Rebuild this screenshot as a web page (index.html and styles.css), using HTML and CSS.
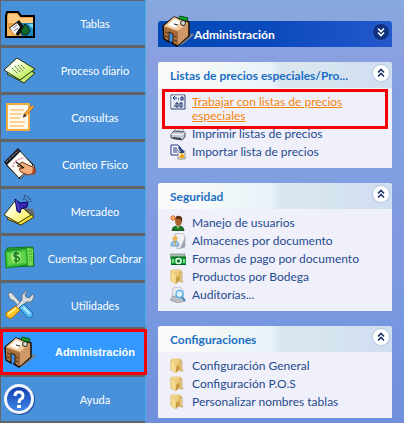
FILE: index.html
```html
<!DOCTYPE html>
<html lang="es">
	<head>
		<meta charset="UTF-8" />
		<meta name="viewport" content="width=device-width, initial-scale=1.0" />
		<title>Administración</title>
		<link rel="stylesheet" href="styles.css">
	</head>
	<body>
		<svg class="sprites" aria-hidden="true">
			<defs>
				<linearGradient id="lime" x1="0" y1="0" x2="1" y2="1">
					<stop offset="0.3" stop-color="#fbfff0" />
					<stop offset="1" stop-color="#a4e60c" />
				</linearGradient>
				<linearGradient id="note" x1="0" y1="0" x2="1" y2="1">
					<stop offset="0.2" stop-color="#fffff4" />
					<stop offset="1" stop-color="#ffef3c" />
				</linearGradient>
				<linearGradient id="globe" x1="0" y1="0" x2="0" y2="1">
					<stop offset="0" stop-color="#123fae" />
					<stop offset="1" stop-color="#3d86ea" />
				</linearGradient>
				<linearGradient id="manila" x1="0" y1="0" x2="1" y2="1">
					<stop offset="0" stop-color="#fbe6a4" />
					<stop offset="1" stop-color="#dfb14e" />
				</linearGradient>
			</defs>
			<symbol id="desk" viewBox="0 0 32 32">
				<path d="M14 28l6-1 10-9 2 2-11 9-5 2z" fill="#7b7f88" />
				<path d="M1 11L12 2l15 5v14L15 31l-5-3v-9l-3-1v9l-5-3z" fill="#b98049" stroke="#1a0f08" stroke-width="1.5" />
				<path d="M2 11L12 2l14 6-10 8z" fill="#f6cda0" />
				<path d="M16 16l10-8v13L16 30z" fill="#cf9866" />
				<path d="M2 12l14 5v12l-5-2v-8l-4-2v8l-4-2z" fill="#a56b3b" />
				<path d="M7 17l4 2v8l-4-1z" fill="#4890da" />
				<path d="M7 17l4 2v9M7 17v9" fill="none" stroke="#2b1809" />
				<path d="M3 17l3 1M3 21l3 1M12 21l3 1M12 25l3 1" stroke="#5d3517" />
				<path d="M6 10l6-6 7 3-6 6z" fill="#fff" />
				<path d="M12 9l4 1" stroke="#222" />
				<path d="M18 1l8 2-1 3-8-2z" fill="#16a82a" stroke="#064d10" />
				<circle cx="21" cy="8" r="2.5" fill="#d8d8cc" stroke="#222" />
			</symbol>
			<symbol id="folder" viewBox="0 0 16 16">
				<path d="M1 2q0-1 1-1h8q1 0 1 1v10H1z" fill="url(#manila)" stroke="#d9b562" stroke-width=".6" />
				<path d="M10 3h2v8l1 2h-3z" fill="#eed9a0" stroke="#b58c3a" stroke-width=".6" />
				<path d="M1 2l5 3v10l-5-3z" fill="#f7dc94" stroke="#dcb45c" stroke-width=".6" />
				<path d="M6 15V9l3-2v5z" fill="#c99a3e" />
			</symbol>
			<symbol id="chevron-up" viewBox="0 0 16 16">
				<path d="M5 7.5l3-3 3 3M5 11.5l3-3 3 3" fill="none" stroke="currentColor" stroke-width="1.6" />
			</symbol>
			<symbol id="chevron-down" viewBox="0 0 16 16">
				<path d="M5 4.5l3 3 3-3M5 8.5l3 3 3-3" fill="none" stroke="currentColor" stroke-width="1.6" />
			</symbol>
		</svg>

		<nav class="sidebar">
			<button class="nav-btn" type="button">
				<svg viewBox="0 0 32 32">
					<path d="M2 30V9l1-4h11l3 4h13v21z" fill="#e8a04a" stroke="#000" stroke-width="2" />
					<path d="M4 7h9l3 4H4zM4 11h25v5H4z" fill="#ffc980" />
					<path d="M17 16h12v13H17z" fill="#1886bd" />
					<path d="M24 17h5v5z" fill="#7bd4ee" />
					<path d="M5 21l10-8 6 8-7 8z" fill="#111" />
					<path d="M6 21l7-5 3 4-5 8z" fill="#f4f6fa" />
					<path d="M9 21l4-3M10 24l4-3" stroke="#778" />
					<path d="M21 17l3 3 2 4-3 4h-4l-2-4z" fill="#11682a" stroke="#03240b" />
					<path d="M3 18l6 11H3z" fill="#f4b35d" />
				</svg>
				<span>Tablas</span>
			</button>
			<button class="nav-btn" type="button">
				<svg viewBox="0 0 32 32">
					<path d="M3 20l9-10 19 9-11 10z" fill="#bfe970" stroke="#1f3007" />
					<path d="M0 16L13 4l18 11-15 11z" fill="url(#lime)" stroke="#24340c" />
					<path d="M8 14l5 5M11 12l5 6M14 11l5 6M17 11l4 4" stroke="#48622e" stroke-dasharray="2 1" />
				</svg>
				<span>Proceso diario</span>
			</button>
			<button class="nav-btn" type="button">
				<svg viewBox="0 0 32 32">
					<path d="M3 3h22v26H3z" fill="#fff9ed" stroke="#f1ac45" stroke-width="2" />
					<path d="M6 9h14M6 13h12M6 17h10M6 21h15M6 25h14" stroke="#f5ad43" />
					<path d="M29 5L20 15" stroke="#8a4c13" stroke-width="3" />
					<path d="M29 5l-8 9" stroke="#ffad32" stroke-width="2" />
					<path d="M21 13l-3 4 4-2z" fill="#222" />
				</svg>
				<span>Consultas</span>
			</button>
			<button class="nav-btn" type="button">
				<svg viewBox="0 0 32 32">
					<path d="M2 17l14-13 15 14-15 13z" fill="#c3c3ba" stroke="#333" />
					<path d="M1 15L15 2l14 15-14 13z" fill="#fffef4" stroke="#222" />
					<path d="M0 14L14 0l3 3L3 17z" fill="#1b1b24" />
					<path d="M2 14L15 2" stroke="#ddd" stroke-dasharray="1 1" />
					<path d="M9 19q0-7 11-9" fill="none" stroke="#e27db3" stroke-width="1.5" stroke-dasharray="2 1" />
					<path d="M13 18l5-4 6 3 7 3v5l-7 2-7-3-2-3 4-1z" fill="#f4ac79" stroke="#77361a" />
					<path d="M12 14l8 6" stroke="#242424" stroke-width="1.5" />
					<path d="M29 19l3 3-1 4-3 1z" fill="#a44622" />
				</svg>
				<span>Conteo Físico</span>
			</button>
			<button class="nav-btn" type="button">
				<svg viewBox="0 0 32 32">
					<path d="M20 13l9 1 2 6-8 4z" fill="#686a70" />
					<path d="M3 24l12-14 15 12-13 8z" fill="#f4dd37" stroke="#3b370b" />
					<path d="M0 20L11 6l16 14-13 8z" fill="url(#note)" stroke="#34330f" />
					<path d="M11 4l5 4 8-1-1 5-6 2-1 4-3-2z" fill="#3429b5" stroke="#0d0750" />
					<path d="M12 5l3 10" stroke="#5a50dc" />
					<path d="M19 4q4-1 5 4M20 1q6 0 7 6" fill="none" stroke="#1b2440" stroke-dasharray="2 1" />
				</svg>
				<span>Mercadeo</span>
			</button>
			<button class="nav-btn" type="button">
				<svg viewBox="0 0 32 32">
					<path d="M3 6l26-1 1 19-26 1z" fill="#37a432" stroke="#14731b" />
					<path d="M1 9l22-3 1 17-22 3z" fill="#39bd38" stroke="#128020" />
					<path d="M3 11l18-2 1 12-18 2z" fill="#65d44d" />
					<path d="M23 6l6 1v16l-5 1z" fill="#76da50" />
					<path d="M25 9h3M25 12h3M25 15h3M25 18h3" stroke="#279a2b" stroke-dasharray="1 1" />
					<ellipse cx="12" cy="15" rx="5" ry="6" fill="#a4eb7b" />
					<path d="M15 12q-5-3-5 1 0 2 3 2t2 3q-1 2-5 0M12 9v12" fill="none" stroke="#167824" stroke-width="1.5" />
				</svg>
				<span>Cuentas por Cobrar</span>
			</button>
			<button class="nav-btn" type="button">
				<svg viewBox="0 0 32 32">
					<path d="M4 5l3-2 7 8 5 6-3 2-6-7-4-2z" fill="#d7e0e5" stroke="#68757f" />
					<path d="M22 2l-4 4v5L10 20l3 3 9-10 5 0 3-5-1-3-4 4-3-1-1-3 3-3z" fill="#d4dce1" stroke="#687985" />
					<path d="M12 17l4 4-8 8q-3 1-5-1t-1-4z" fill="#ffc62b" stroke="#b76c0a" />
					<path d="M4 25l8-6" stroke="#fff082" stroke-width="2" />
					<path d="M17 17l3-2 8 8q2 3 0 5t-5 0l-8-9z" fill="#52b9f8" stroke="#1d6da6" />
					<path d="M19 18l7 7" stroke="#b8e7ff" stroke-width="2" />
				</svg>
				<span>Utilidades</span>
			</button>
			<button class="nav-btn active" type="button">
				<svg><use href="#desk" /></svg>
				<span>Administración</span>
			</button>
			<button class="nav-btn" type="button">
				<svg viewBox="0 0 32 32">
					<circle cx="16" cy="17" r="15" fill="#1d4c97" />
					<circle cx="15" cy="16" r="15" fill="#f3f6fc" />
					<circle cx="15" cy="16" r="12" fill="url(#globe)" />
					<path d="M11 13q0-4 4-4t4 4q0 2-2 3t-2 4" fill="none" stroke="#fff" stroke-width="3" />
					<path d="M13 22h4v3h-4z" fill="#fff" />
				</svg>
				<span>Ayuda</span>
			</button>
		</nav>

		<main class="content">
			<header class="banner">
				<svg class="banner-icon"><use href="#desk" /></svg>
				<h1>Administración</h1>
				<button class="toggle dark" type="button" aria-label="Expandir">
					<svg><use href="#chevron-down" /></svg>
				</button>
			</header>

			<section class="panel">
				<div class="panel-head">
					<h2>Listas de precios especiales/Pro...</h2>
					<button class="toggle" type="button" aria-label="Contraer">
						<svg><use href="#chevron-up" /></svg>
					</button>
				</div>
				<ul>
					<li class="marked">
						<a class="current" href="#">
							<svg viewBox="0 0 16 16">
								<path d="M1 1h14v14H1z" fill="#dce6f7" stroke="#34456d" />
								<path d="M2 14V2h12" fill="none" stroke="#fff" />
								<path d="M3 4h4M5 2L3 4l2 2" fill="none" stroke="#173c9c" />
								<path d="M8 5h1M4 12h1" stroke="#111" />
								<path d="M11 3h2v3h-2zM6 9h2v4H6zM10 9h2v4h-2z" fill="none" stroke="#14275e" />
							</svg>
							<span>Trabajar con listas de precios especiales</span>
						</a>
					</li>
					<li>
						<a href="#">
							<svg viewBox="0 0 16 16">
								<path d="M4 6l2-5h8l-2 6z" fill="#fff" stroke="#7a8595" />
								<path d="M7 3h5M6 5h5" stroke="#9eb4d0" />
								<path d="M1 8l3-3 11 1v5l-3 3-11-2z" fill="#bfc6cf" stroke="#454f5c" />
								<path d="M1 8l11 1 3-3" fill="none" stroke="#fff" />
								<path d="M3 11l8 1v2l-8-1z" fill="#3b4552" />
							</svg>
							<span>Imprimir listas de precios</span>
						</a>
					</li>
					<li>
						<a href="#">
							<svg viewBox="0 0 16 16">
								<path d="M1 1h7l2 2v8H1z" fill="#fff" stroke="#1c2f85" />
								<path d="M3 4h4M3 6h5M3 8h4" stroke="#1c2f85" />
								<path d="M8 7h7v8H8z" fill="#fff0c8" stroke="#8992a6" />
								<path d="M12 8l3 6H9z" fill="#f0a51f" />
								<path d="M9 2l5 5V3v6H9l2-2-3-3z" fill="#234183" />
							</svg>
							<span>Importar lista de precios</span>
						</a>
					</li>
				</ul>
			</section>

			<section class="panel">
				<div class="panel-head">
					<h2>Seguridad</h2>
					<button class="toggle" type="button" aria-label="Contraer">
						<svg><use href="#chevron-up" /></svg>
					</button>
				</div>
				<ul>
					<li>
						<a href="#">
							<svg viewBox="0 0 16 16">
								<path d="M2 16q0-5 5-5h2q5 0 5 5z" fill="#1d7427" stroke="#0c4514" stroke-width=".6" />
								<path d="M6 11h4l-2 3z" fill="#84c26e" />
								<ellipse cx="8.5" cy="6" rx="3.5" ry="5" fill="#a8642c" />
								<path d="M5 4q1-4 5-3 3 1 2 6l-2-3z" fill="#5e3213" />
								<path d="M1 1l4 4M5 1L1 5M3 0v6M0 3h6" stroke="#ee4d17" />
								<circle cx="3" cy="3" r="1" fill="#ffe13c" />
							</svg>
							<span>Manejo de usuarios</span>
						</a>
					</li>
					<li>
						<a href="#">
							<svg viewBox="0 0 16 16">
								<path d="M5 1l7-1 3 3v11l-8 2z" fill="#eef0f3" stroke="#a4a9b2" stroke-width=".7" />
								<path d="M15 4v10l-5 2z" fill="#a0a4ac" />
								<path d="M1 13q0-5 4-5t4 5z" fill="#99cbee" stroke="#4d87ba" stroke-width=".7" />
								<circle cx="5" cy="5.5" r="2.5" fill="#edb64d" />
								<path d="M4 9l1 4 1-4z" fill="#e9a126" />
							</svg>
							<span>Almacenes por documento</span>
						</a>
					</li>
					<li>
						<a href="#">
							<svg viewBox="0 0 16 16">
								<path d="M0 3h15v5H0z" fill="#a7bfad" stroke="#637d6a" stroke-width=".6" />
								<path d="M1 6h15v8H1z" fill="#0b9932" />
								<path d="M1 6h15M1 13.5h15" stroke="#075b1d" />
								<path d="M2 8h2v4H2zM13 8h2v4h-2z" fill="#79d984" />
								<circle cx="8.5" cy="10" r="2.5" fill="#0b8029" stroke="#e8ffe8" stroke-width="1.5" />
							</svg>
							<span>Formas de pago por documento</span>
						</a>
					</li>
					<li>
						<a href="#">
							<svg><use href="#folder" /></svg>
							<span>Productos por Bodega</span>
						</a>
					</li>
					<li>
						<a href="#">
							<svg viewBox="0 0 16 16">
								<path d="M3 1l7-1 3 3v10H2z" fill="#edeff2" stroke="#a5abb4" stroke-width=".7" />
								<path d="M0 13l3-4 10 1 2 4-7 2z" fill="#b9bdc4" stroke="#85898f" stroke-width=".6" />
								<circle cx="9.5" cy="7" r="3.5" fill="#dff4ff" stroke="#59afe1" stroke-width="1.5" />
								<path d="M12 10l3 4" stroke="#498bc2" stroke-width="2" />
							</svg>
							<span>Auditorías...</span>
						</a>
					</li>
				</ul>
			</section>

			<section class="panel">
				<div class="panel-head">
					<h2>Configuraciones</h2>
					<button class="toggle" type="button" aria-label="Contraer">
						<svg><use href="#chevron-up" /></svg>
					</button>
				</div>
				<ul>
					<li>
						<a href="#">
							<svg><use href="#folder" /></svg>
							<span>Configuración General</span>
						</a>
					</li>
					<li>
						<a href="#">
							<svg><use href="#folder" /></svg>
							<span>Configuración P.O.S</span>
						</a>
					</li>
					<li>
						<a href="#">
							<svg><use href="#folder" /></svg>
							<span>Personalizar nombres tablas</span>
						</a>
					</li>
				</ul>
			</section>
		</main>
	</body>
</html>
```

FILE: styles.css
```css
* {
	margin: 0;
	padding: 0;
	box-sizing: border-box;
}

body {
	display: flex;
	min-height: 100vh;
	font: 12px Lato, sans-serif;
	color: #1f4b8f;
}
.sprites {
	position: absolute;
	width: 0;
	height: 0;
}
button {
	border: none;
	font: inherit;
	cursor: pointer;
}

/* left menu */
.sidebar {
	display: flex;
	flex-direction: column;
	flex: none;
	gap: 3px;
	width: 146px;
	padding: 1px 0 1px 1px;
	border-right: 1px solid #40b0e4;
	background-color: #636363;
}
.nav-btn {
	display: flex;
	align-items: center;
	gap: 9px;
	height: 44px;
	padding-left: 3px;
	background-color: #4890da;
	color: white;
	font-size: 11px;
}
.nav-btn svg {
	flex: none;
	width: 32px;
	height: 32px;
}
.nav-btn span {
	flex: 1;
	text-align: center;
	white-space: nowrap;
}
.nav-btn.active {
	position: relative;
	background-color: #3399ff;
	font-family: 'Liberation Sans', sans-serif;
	font-weight: bold;
}
.nav-btn.active::after {
	content: '';
	position: absolute;
	inset: -1px -2px -1px -1px;
	border: 3px solid #f60008;
}

/* right side */
.content {
	display: flex;
	flex-direction: column;
	flex: 1;
	gap: 15px;
	padding: 21px 12px 5px;
	background: linear-gradient(#88a9de, #8a9fe0 14%, #80a0e0 24%, #809fe0 42%, #8298e2 54%, #7898e0 72%, #6f8fdc);
}
.banner,
.panel-head {
	display: flex;
	align-items: center;
	justify-content: space-between;
	height: 26px;
	padding-right: 3px;
	border-radius: 3px 3px 0 0;
}
.banner {
	padding-left: 4px;
	background: linear-gradient(90deg, #0048b4, #0c4abc 50%, #2459cc);
	color: white;
}
.banner-icon {
	align-self: flex-end;
	width: 32px;
	height: 32px;
}
h1,
h2 {
	flex: 1;
	font-size: 12px;
	font-weight: bold;
	white-space: nowrap;
}
.panel {
	border-radius: 3px 3px 0 0;
	background-color: #f0f0fa;
}
.panel-head {
	padding-left: 12px;
	background: linear-gradient(90deg, #fafafa 15%, #f2f8f6 24%, #e8f2fa 48%, #dce6ee 52%, #d8e4f0 70%, #d2e6f0 76%, #d6dff0 80%, #cfdff0);
	color: #1b6fc4;
}
.toggle {
	width: 16px;
	height: 16px;
	margin-bottom: 4px;
	border-radius: 50%;
	background-color: white;
	box-shadow: 0 0 1px 1px #b4c4dc;
	color: #1c3264;
}
.toggle svg {
	display: block;
	width: 16px;
	height: 16px;
}
.toggle.dark {
	background-color: #103080;
	box-shadow: 0 0 1px 1px #2c60c4;
	color: white;
}
.panel ul {
	padding: 5px 12px 7px;
	list-style: none;
}
.panel a {
	display: flex;
	gap: 6px;
	padding: 2px 0;
	color: inherit;
	line-height: 14px;
	text-decoration: none;
}
.panel a svg {
	flex: none;
	width: 16px;
	height: 16px;
	margin: -1px 0;
}
.panel a.current {
	color: #f5850a;
	text-decoration: underline;
}
.marked {
	position: relative;
}
.marked::after {
	content: '';
	position: absolute;
	inset: -4px -8px;
	border: 3px solid #f60008;
}
```
